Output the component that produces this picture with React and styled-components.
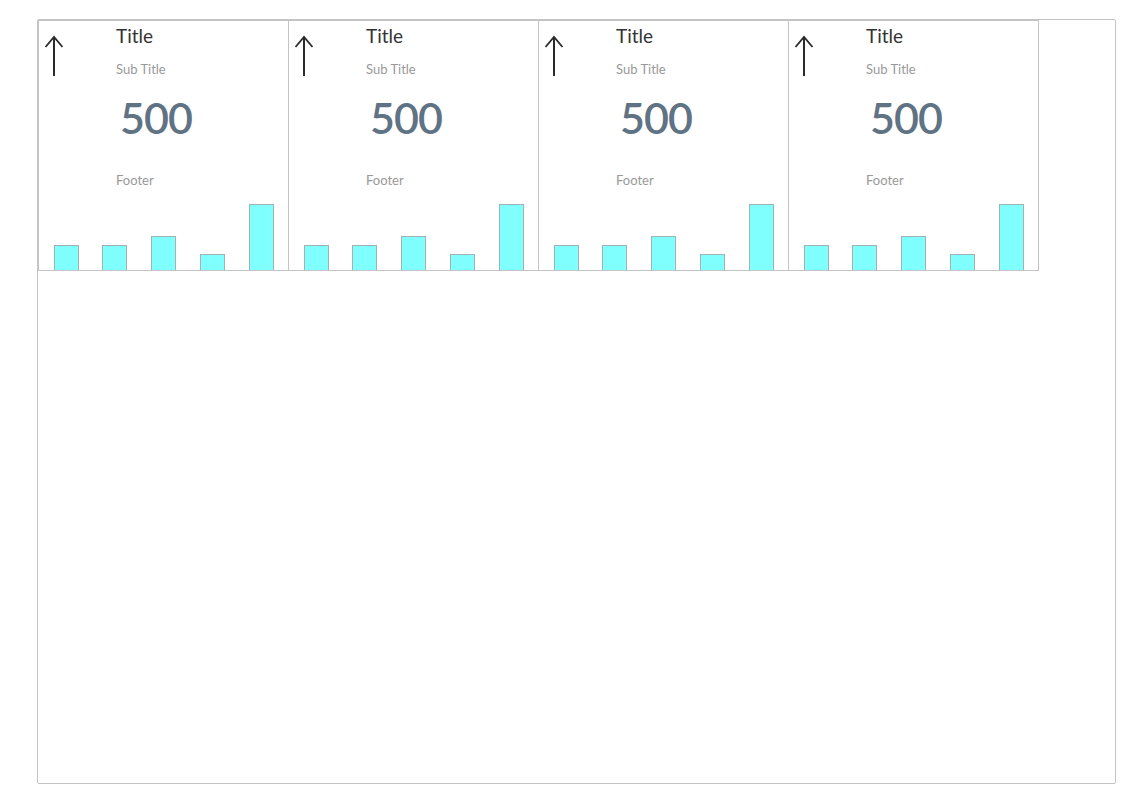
import React from "react";
import styled, { createGlobalStyle } from "styled-components";

const Global = createGlobalStyle`
  html, body { margin: 0; padding: 0; background: #fff; }
  body { font-family: "Source Sans Pro", Lato, "Open Sans", sans-serif; }
`;

const Frame = styled.div`
  box-sizing: border-box;
  margin: 19px 0 0 37px;
  width: 1079px;
  height: 765px;
  border: 1px solid #c4c4c4;
  border-radius: 2px;
`;

const Row = styled.div`
  display: flex;
`;

const Card = styled.div`
  box-sizing: border-box;
  width: 251px;
  height: 251px;
  margin-right: -1px;
  border: 1px solid #c4c4c4;
  display: flex;
  flex-direction: column;
`;

const Top = styled.div`
  display: flex;
  flex: 1;
`;

const IconCol = styled.div`
  width: 77px;
  padding-top: 14px;
  padding-left: 2px;
  box-sizing: border-box;
`;

const Body = styled.div`
  display: flex;
  flex-direction: column;
`;

const Title = styled.div`
  font-size: 19px;
  line-height: 24px;
  color: #333;
  margin-top: 3px;
`;

const Sub = styled.div`
  font-size: 13px;
  line-height: 16px;
  color: #999;
  margin-top: 13px;
`;

const Value = styled.div`
  font-size: 43px;
  font-weight: 600;
  letter-spacing: -1px;
  line-height: 50px;
  color: #5f7384;
  margin-top: 16px;
  margin-left: 4px;
`;

const Footer = styled.div`
  font-size: 13px;
  line-height: 16px;
  color: #999;
  margin-top: 29px;
`;

const Chart = styled.svg`
  display: block;
  width: 249px;
  height: 80px;
`;

const bars = [25, 25, 34, 16, 66];
const xs = [15, 63, 112, 161, 210];

function Arrow() {
  return (
    <svg width="24" height="44" viewBox="0 0 24 44">
      <path d="M13 2 V41" stroke="#2b2b2b" strokeWidth="2" fill="none" />
      <path d="M4.5 12 L13 2 L21.5 12" stroke="#2b2b2b" strokeWidth="1.8" fill="none" />
    </svg>
  );
}

function Stat() {
  return (
    <Card>
      <Top>
        <IconCol>
          <Arrow />
        </IconCol>
        <Body>
          <Title>Title</Title>
          <Sub>Sub Title</Sub>
          <Value>500</Value>
          <Footer>Footer</Footer>
        </Body>
      </Top>
      <Chart viewBox="0 0 249 80">
        {bars.map((h, i) => (
          <rect
            key={i}
            x={xs[i] + 0.5}
            y={80 - h + 0.5}
            width={24}
            height={h}
            fill="#80ffff"
            stroke="#9fb3b3"
            strokeWidth="1"
          />
        ))}
      </Chart>
    </Card>
  );
}

export default function App() {
  return (
    <>
      <Global />
      <Frame>
        <Row>
          <Stat />
          <Stat />
          <Stat />
          <Stat />
        </Row>
      </Frame>
    </>
  );
}
